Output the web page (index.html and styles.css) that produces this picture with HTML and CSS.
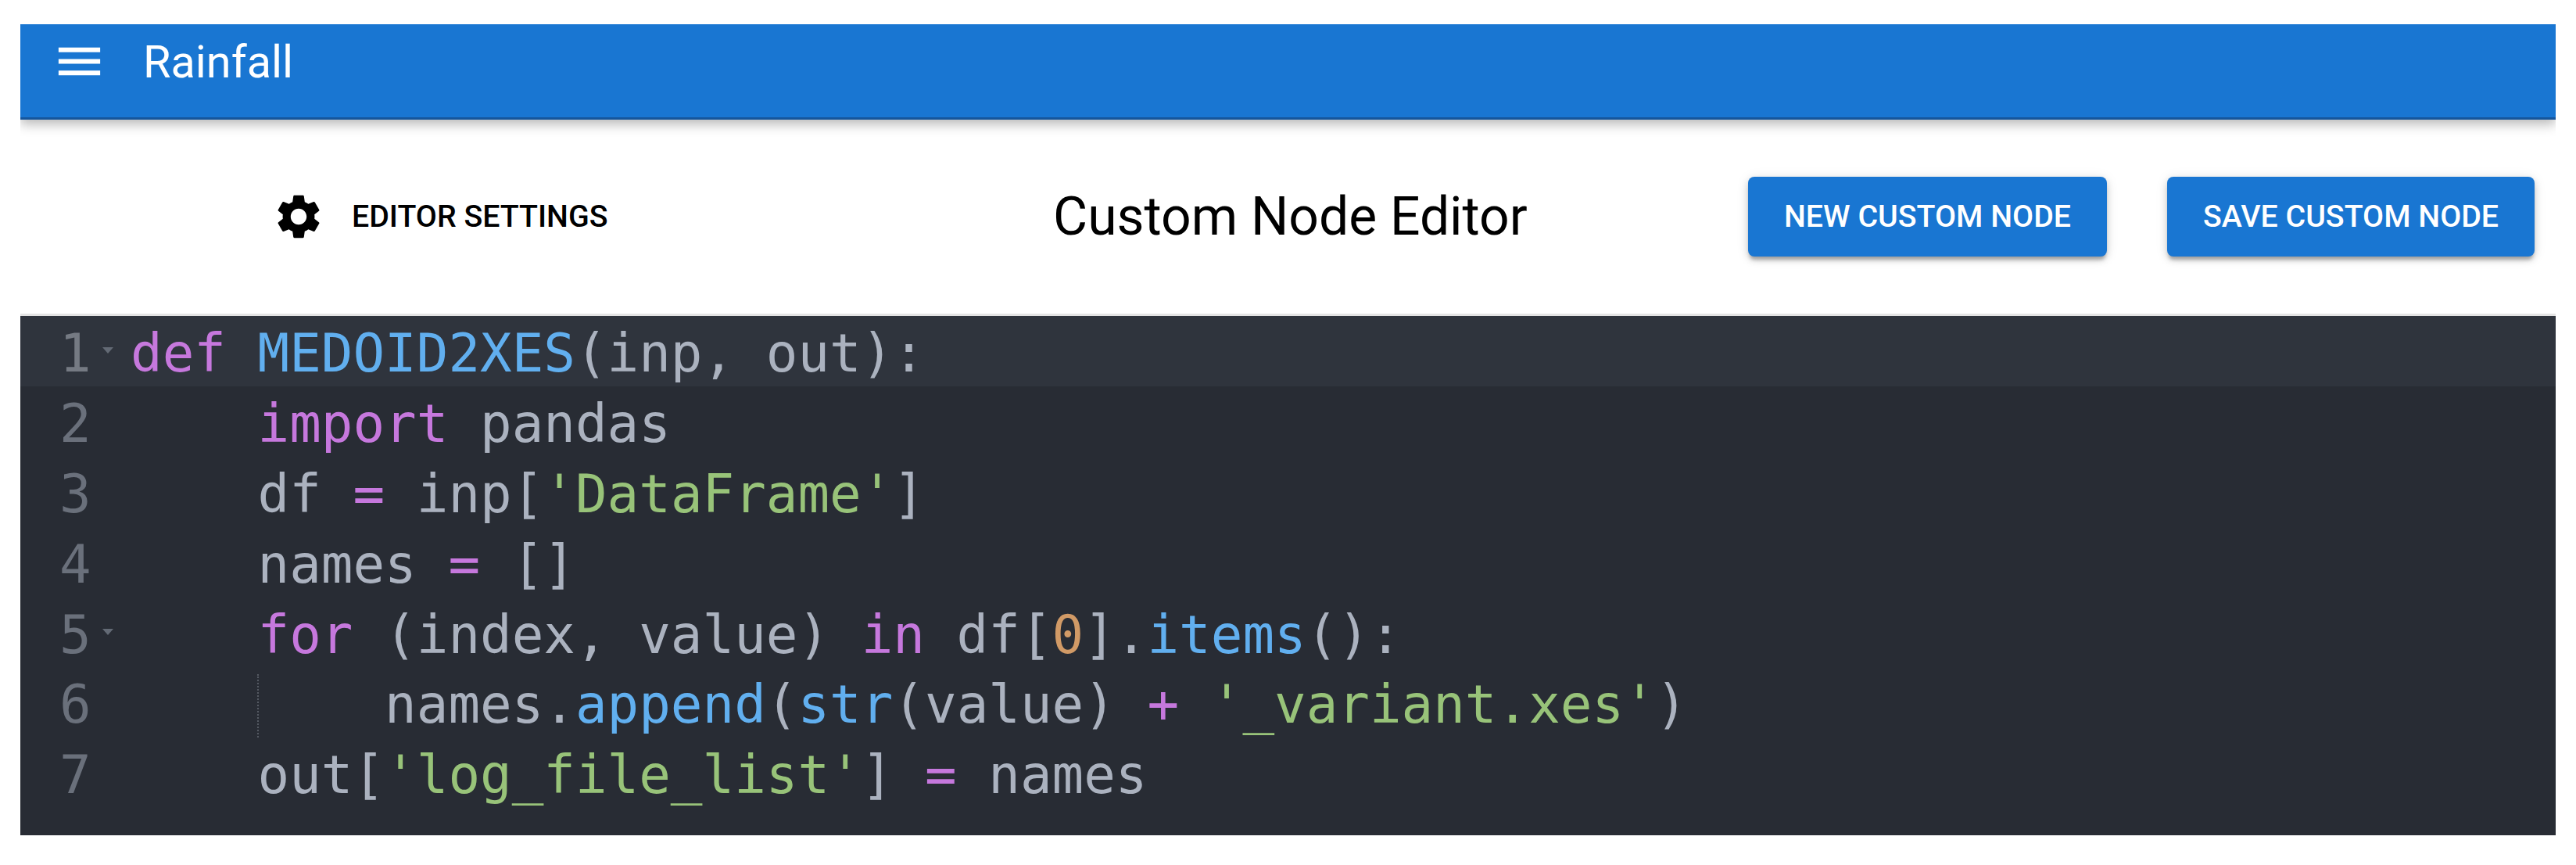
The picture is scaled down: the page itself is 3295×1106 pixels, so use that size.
FILE: index.html
```html
<!DOCTYPE html>
<html>
<head>
<meta charset="utf-8">
<title>Rainfall</title>
<link rel="stylesheet" href="styles.css">
</head>
<body>
<div class="page">
  <header class="appbar">
    <svg class="menu" viewBox="0 0 24 24"><path d="M3 18h18v-2H3v2zm0-5h18v-2H3v2zm0-7v2h18V6H3z"/></svg>
    <span class="brand">Rainfall</span>
  </header>
  <section class="toolbar">
    <div class="settings">
      <svg class="gear" viewBox="0 0 24 24"><path d="M19.14 12.94c.04-.3.06-.61.06-.94 0-.32-.02-.64-.07-.94l2.03-1.58c.18-.14.23-.41.12-.61l-1.92-3.32c-.12-.22-.37-.29-.59-.22l-2.39.96c-.5-.38-1.03-.7-1.62-.94l-.36-2.54c-.04-.24-.24-.41-.48-.41h-3.84c-.24 0-.43.17-.47.41l-.36 2.54c-.59.24-1.13.57-1.62.94l-2.39-.96c-.22-.08-.47 0-.59.22L2.74 8.87c-.12.21-.08.47.12.61l2.03 1.58c-.05.3-.09.63-.09.94s.02.64.07.94l-2.03 1.58c-.18.14-.23.41-.12.61l1.92 3.32c.12.22.37.29.59.22l2.39-.96c.5.38 1.03.7 1.62.94l.36 2.54c.05.24.24.41.48.41h3.84c.24 0 .44-.17.47-.41l.36-2.54c.59-.24 1.13-.56 1.62-.94l2.39.96c.22.08.47 0 .59-.22l1.92-3.32c.12-.22.07-.47-.12-.61l-2.01-1.58zM12 15.6c-1.98 0-3.6-1.62-3.6-3.6s1.62-3.6 3.6-3.6 3.6 1.62 3.6 3.6-1.62 3.6-3.6 3.6z"/></svg>
      <span class="settings-label">EDITOR SETTINGS</span>
    </div>
    <h1 class="title">Custom Node Editor</h1>
    <button class="btn btn-new">NEW CUSTOM NODE</button>
    <button class="btn btn-save">SAVE CUSTOM NODE</button>
  </section>
  <section class="editor">
    <div class="line active"><span class="num fold">1</span><span class="code"><i class="k">def</i> <i class="f">MEDOID2XES</i>(inp, out):</span></div>
    <div class="line"><span class="num">2</span><span class="code">    <i class="k">import</i> pandas</span></div>
    <div class="line"><span class="num">3</span><span class="code">    df <i class="k">=</i> inp[<i class="s">'DataFrame'</i>]</span></div>
    <div class="line"><span class="num">4</span><span class="code">    names <i class="k">=</i> []</span></div>
    <div class="line"><span class="num fold">5</span><span class="code"><i class="k">    for</i> (index, value) <i class="k">in</i> df[<i class="o">0</i>].<i class="f">items</i>():</span></div>
    <div class="line guide"><span class="num">6</span><span class="code">        names.<i class="f">append</i>(<i class="f">str</i>(value) <i class="k">+</i> <i class="s">'_variant.xes'</i>)</span></div>
    <div class="line"><span class="num">7</span><span class="code">    out[<i class="s">'log_file_list'</i>] <i class="k">=</i> names</span></div>
  </section>
</div>
</body>
</html>
```
FILE: styles.css
```css
* { box-sizing: border-box; }
html, body { margin: 0; background: #fff; }
.page { width: 3295px; height: 1106px; padding: 31px 26px 0; overflow: hidden; }
.appbar { height: 122px; background: #1976d2; border-bottom: 3px solid #15569c; box-shadow: 0 6px 14px rgba(0,0,0,.28); display: flex; align-items: flex-start; padding: 12px 0 0 40px; color: #fff; clip-path: inset(0 0 -25px 0); }
.menu { width: 71px; height: 71px; fill: #fff; flex: none; }
.brand { font: 400 57.6px/58px Roboto, sans-serif; margin-left: 46px; margin-top: 8px; }
.toolbar { height: 248px; margin-bottom: 3px; display: flex; align-items: center; font-family: Roboto, sans-serif; }
.settings { display: flex; align-items: center; margin-left: 322px; width: 999px; }
.gear { width: 68px; height: 68px; fill: #000; flex: none; }
.settings-label { font: 500 39.3px/40px Roboto, sans-serif; margin-left: 34px; color: #000; }
.title { font: 400 67.8px/80px Roboto, sans-serif; margin: 0; color: #000; width: 889px; }
.btn { height: 102px; border: 0; border-radius: 8px; background: #1976d2; color: #fff; font: 500 39.3px/40px Roboto, sans-serif; box-shadow: 0 6px 4px -2px rgba(0,0,0,.25), 0 4px 10px rgba(0,0,0,.14), 0 2px 16px rgba(0,0,0,.1); padding: 0; flex: none; }
.btn-new { width: 459px; margin-right: 77px; }
.btn-save { width: 470px; }
.editor { height: 664px; background: #282c34; box-shadow: 0 -3px 0 #e4e4e4; font-family: "DejaVu Sans Mono", monospace; font-size: 67.5px; }
.line { height: 89.9px; line-height: 96px; display: flex; color: #abb2bf; white-space: pre; position: relative; }
.line.active { background: #2f343d; }
.num { width: 141px; flex: none; color: #6a707b; padding-left: 50px; position: relative; }
.active .num { color: #757a83; }
.fold::after { content: ""; position: absolute; left: 105px; top: 40px; border-left: 7px solid transparent; border-right: 7px solid transparent; border-top: 8px solid #636a75; }
.code i { font-style: normal; }
.k { color: #c678dd; }
.f { color: #61afef; }
.s { color: #98c379; }
.o { color: #d19a66; }
.guide::before { content: ""; position: absolute; left: 303px; top: 9px; bottom: 0; border-left: 2px dotted #555a63; }
```
